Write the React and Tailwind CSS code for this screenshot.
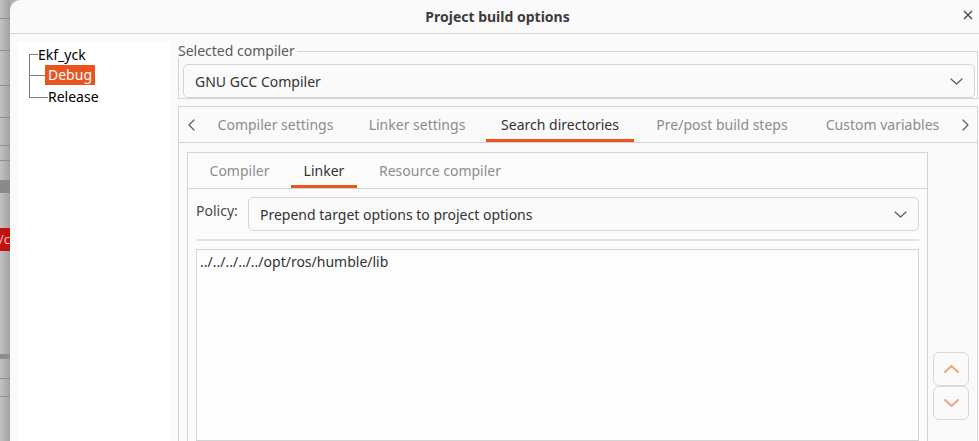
import React from "react";

function Chevron({ dir = "down", className = "", color = "#5a5a5a", w = 12, h = 7, sw = 1.2 }) {
  const pts = {
    down: `1,1 ${w / 2},${h - 1} ${w - 1},1`,
    up: `1,${h - 1} ${w / 2},1 ${w - 1},${h - 1}`,
    left: `${w - 1},1 1,${h / 2} ${w - 1},${h - 1}`,
    right: `1,1 ${w - 1},${h / 2} 1,${h - 1}`,
  }[dir];
  return (
    <svg width={w} height={h} viewBox={`0 0 ${w} ${h}`} className={className}>
      <polyline points={pts} fill="none" stroke={color} strokeWidth={sw} strokeLinecap="round" strokeLinejoin="round" />
    </svg>
  );
}

function Desktop() {
  return (
    <div className="w-[10px] shrink-0 flex flex-col bg-gradient-to-r from-[#c2c2c2] to-[#a2a2a2] text-[13px] leading-none overflow-hidden">
      <div className="h-[18px]" />
      <div className="h-px bg-[#8e8e8e]" />
      <div className="h-[31px]" />
      <div className="h-px bg-[#8e8e8e]" />
      <div className="h-[34px]" />
      <div className="h-px bg-[#8e8e8e]" />
      <div className="h-[31px]" />
      <div className="h-px bg-[#8e8e8e]" />
      <div className="h-[27px]" />
      <div className="h-px bg-[#8e8e8e]" />
      <div className="h-[14px]" />
      <div className="h-px bg-[#8e8e8e]" />
      <div className="h-[19px]" />
      <div className="h-[13px] bg-[#8a8a8a]" />
      <div className="h-[35px]" />
      <div className="h-[23px] bg-[#c0120f] text-[#f0c0c0] flex items-center justify-end">e/c</div>
      <div className="h-[103px]" />
      <div className="h-[5px] bg-[#8e8e8e]" />
      <div className="h-[19px]" />
      <div className="h-px bg-[#8e8e8e]" />
      <div className="h-[17px]" />
      <div className="h-px bg-[#8e8e8e]" />
      <div className="flex-1" />
    </div>
  );
}

function Tree() {
  return (
    <div className="w-[152px] shrink-0 bg-white relative pt-[3px] text-black">
      <svg width="40" height="70" className="absolute left-0 top-0">
        <g stroke="#808080" strokeWidth="1" shapeRendering="crispEdges">
          <line x1="11.5" y1="12.5" x2="11.5" y2="55.5" />
          <line x1="11" y1="12.5" x2="20" y2="12.5" />
          <line x1="11" y1="33.5" x2="27" y2="33.5" />
          <line x1="11" y1="55.5" x2="30" y2="55.5" />
        </g>
      </svg>
      <div className="h-[20px] leading-[20px] pl-[20px]">Ekf_yck</div>
      <div className="h-[20px] pl-[27px] flex">
        <div className="w-[50px] bg-[#e95420] text-white leading-[20px] px-[3px]">Debug</div>
      </div>
      <div className="h-[20px] leading-[20px] pl-[30px] mt-[2px]">Release</div>
    </div>
  );
}

function Combo({ text, className = "" }) {
  return (
    <div className={`h-[34px] rounded-[5px] border border-[#d4d4d4] bg-[#fafafa] flex items-center justify-between pl-[11px] pr-[11px] text-[#333] ${className}`}>
      <span>{text}</span>
      <Chevron dir="down" w={13} h={7} />
    </div>
  );
}

export default function App() {
  const outerTabs = [
    { t: "Compiler settings", w: "w-[145px]" },
    { t: "Linker settings", w: "w-[124px]" },
    { t: "Search directories", w: "w-[148px]", active: true },
    { t: "Pre/post build steps", w: "w-[162px]" },
    { t: "Custom variables", w: "w-[141px]" },
  ];
  return (
    <div className="w-[979px] h-[441px] flex bg-[#b0b0b0] overflow-hidden font-['Noto_Sans',sans-serif] text-[14px]">
      <Desktop />
      <div className="flex-1 flex flex-col bg-[#fafafa] rounded-tl-[10px] overflow-hidden">
        <div className="h-[34px] shrink-0 border-b border-[#d4d4d4] flex items-center relative">
          <div className="flex-1 text-center font-bold text-[#3c3c3c] text-[14px] leading-[20px] pl-[6px] pt-[1px]">Project build options</div>
          <svg width="10" height="10" viewBox="0 0 10 10" className="absolute right-[6px] top-[10px]">
            <path d="M1 1 L9 9 M9 1 L1 9" stroke="#4a4a4a" strokeWidth="1.4" />
          </svg>
        </div>
        <div className="flex-1 flex pl-[8px] pt-[8px] pr-[1px] gap-[8px] min-h-0">
          <Tree />
          <div className="flex-1 flex flex-col min-w-0">
            <div className="h-[16px] flex">
              <span className="text-[#5a5a5a] leading-[16px] pr-[2px] mt-[1px]">Selected compiler</span>
              <div className="flex-1 self-end h-[7px] border-t border-r border-[#d4d4d4]" />
            </div>
            <div className="border-x border-b border-[#d4d4d4] pl-[4px] pr-[2px] pt-[6px]">
              <Combo text="GNU GCC Compiler" className="h-[33px]" />
            </div>
            <div className="mt-[7px] flex-1 border-x border-t border-[#d4d4d4] flex flex-col">
              <div className="h-[36px] shrink-0 border-b border-[#d4d4d4] flex">
                <div className="w-[24px] flex items-center justify-center">
                  <Chevron dir="left" w={7} h={12} />
                </div>
                {outerTabs.map((tab, i) => (
                  <div
                    key={tab.t}
                    className={`${tab.w} ${i === 0 ? "" : i === 4 ? "ml-[9px]" : "ml-[7px]"} flex items-center justify-center whitespace-nowrap ${
                      tab.active ? "text-[#333] border-b-[3px] border-[#e95420] pt-[3px]" : "text-[#8c8c8c]"
                    }`}
                  >
                    {tab.t}
                  </div>
                ))}
                <div className="flex-1 flex items-center justify-center">
                  <Chevron dir="right" w={7} h={12} />
                </div>
              </div>
              <div className="flex-1 flex pl-[8px] pr-[8px] pt-[9px] gap-[5px] min-h-0">
                <div className="flex-1 border-x border-t border-[#d4d4d4] bg-[#fcfcfc] flex flex-col">
                  <div className="h-[36px] shrink-0 border-b border-[#d4d4d4] flex pl-[8px] gap-[8px]">
                    <div className="w-[87px] flex items-center justify-center text-[#8c8c8c]">Compiler</div>
                    <div className="w-[66px] flex items-center justify-center text-[#333] border-b-[3px] border-[#e95420] pt-[3px]">Linker</div>
                    <div className="w-[150px] flex items-center justify-center text-[#8c8c8c] whitespace-nowrap">Resource compiler</div>
                  </div>
                  <div className="flex-1 flex flex-col px-[8px] pt-[8px]">
                    <div className="flex">
                      <span className="w-[52px] text-[#4a4a4a] leading-[20px] pt-[4px]">Policy:</span>
                      <Combo text="Prepend target options to project options" className="flex-1" />
                    </div>
                    <div className="mt-[8px] h-[2px] bg-[#e2e2e2]" />
                    <div className="mt-[8px] flex-1 border border-[#d4d4d4] bg-[#fdfdfd] pl-[3px] pt-[2px] text-[#333] leading-[20px]">
                      ../../../../../opt/ros/humble/lib
                    </div>
                  </div>
                </div>
                <div className="w-[36px] shrink-0 flex flex-col pt-[200px]">
                  <div className="h-[34px] rounded-[6px] border border-[#d8d8d8] flex items-center justify-center">
                    <Chevron dir="up" w={15} h={8} color="#f1a483" sw={2} />
                  </div>
                  <div className="h-[34px] rounded-[6px] border border-[#d8d8d8] flex items-center justify-center">
                    <Chevron dir="down" w={15} h={8} color="#f1a483" sw={2} />
                  </div>
                </div>
              </div>
            </div>
          </div>
        </div>
      </div>
    </div>
  );
}
